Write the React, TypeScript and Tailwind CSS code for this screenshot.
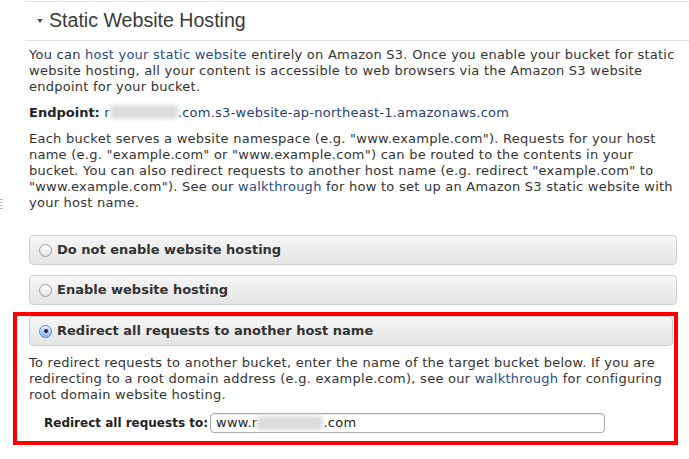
import type { ReactNode } from "react";

const LINK = "text-[#1f4e8c]";

function Radio({ checked }: { checked?: boolean }) {
  if (checked) {
    return (
      <span className="flex h-[13px] w-[13px] shrink-0 items-center justify-center rounded-full border border-[#5a86c4] bg-gradient-to-b from-[#d9e8fb] to-[#8fb6ea] shadow-[inset_0_1px_1px_rgba(255,255,255,0.8)]">
        <span className="h-[4px] w-[4px] rounded-full bg-[#1f2a3a]" />
      </span>
    );
  }
  return (
    <span className="h-[13px] w-[13px] shrink-0 rounded-full border border-[#9a9a9a] bg-gradient-to-b from-[#ffffff] to-[#e4e4e4]" />
  );
}

function OptionBar({ label, checked }: { label: string; checked?: boolean }) {
  return (
    <div className="flex h-[30px] items-center gap-[5px] rounded-[4px] border border-[#cfcfcf] bg-gradient-to-b from-[#f7f7f7] to-[#e4e4e4] pl-[9px]">
      <Radio checked={checked} />
      <span className="text-[13px] font-bold text-[#333]">{label}</span>
    </div>
  );
}

function Blur({ w }: { w: number }) {
  return (
    <span
      className="inline-block h-[14px] rounded-[3px] bg-[#dcdcdc] align-[-2px] blur-[2px]"
      style={{ width: w }}
    />
  );
}

function P({ children, className = "" }: { children: ReactNode; className?: string }) {
  return (
    <p className={`text-[13px] leading-[16px] tracking-[0.25px] text-[#333] ${className}`}>{children}</p>
  );
}

export default function App() {
  return (
    <div className="relative h-[459px] w-[689px] overflow-hidden bg-white font-['DejaVu_Sans',Verdana,sans-serif]">
      {/* resize grip on the far left */}
      <div className="absolute left-0 top-[199px] flex flex-col gap-[2px]">
        <span className="h-px w-[3px] bg-[#bbb]" />
        <span className="h-px w-[3px] bg-[#bbb]" />
        <span className="h-px w-[3px] bg-[#bbb]" />
        <span className="h-px w-[3px] bg-[#bbb]" />
      </div>

      <div className="ml-[25px] mt-px border-t border-[#e2e2e2]">
        {/* Header */}
        <div className="flex h-[39px] items-center border-b border-[#dedede] pl-[12px]">
          <span className="h-0 w-0 border-x-[3.5px] border-t-[4px] border-x-transparent border-t-[#555]" />
          <h2 className="ml-[6px] font-['Liberation_Sans',Arial,sans-serif] text-[19.6px] text-[#3a3a3a]">
            Static Website Hosting
          </h2>
        </div>

        <div className="pl-[4px] pr-[12px] pt-[6px]">
          <P>
            You can <span className={LINK}>host your static website</span> entirely on Amazon S3. Once you enable your bucket for static
            <br />
            website hosting, all your content is accessible to web browsers via the Amazon S3 website
            <br />
            endpoint for your bucket.
          </P>

          <P className="mt-[10px]">
            <span className="font-bold tracking-normal text-[#222]">Endpoint:</span>{" "}
            <span className="text-[#1f3f70]">
              r<Blur w={68} />.com.s3-website-ap-northeast-1.amazonaws.com
            </span>
          </P>

          <P className="mt-[10px]">
            Each bucket serves a website namespace (e.g. "www.example.com"). Requests for your host
            <br />
            name (e.g. "example.com" or "www.example.com") can be routed to the contents in your
            <br />
            bucket. You can also redirect requests to another host name (e.g. redirect "example.com" to
            <br />
            "www.example.com"). See our <span className={LINK}>walkthrough</span> for how to set up an Amazon S3 static website with
            <br />
            your host name.
          </P>

          <div className="mt-[24px]">
            <OptionBar label="Do not enable website hosting" />
          </div>
          <div className="mt-[10px]">
            <OptionBar label="Enable website hosting" />
          </div>

          {/* Highlighted option */}
          <div className="-ml-[16px] mt-[7px] w-[665px] border-4 border-[#ff0000] pb-[8px] pl-[12px] pr-px">
            <OptionBar label="Redirect all requests to another host name" checked />
            <P className="mt-[9px]">
              To redirect requests to another bucket, enter the name of the target bucket below. If you are
              <br />
              redirecting to a root domain address (e.g. example.com), see our <span className={LINK}>walkthrough</span> for configuring
              <br />
              root domain website hosting.
            </P>
            <div className="mt-[10px] flex items-center">
              <label className="w-[181px] pr-[2px] text-right text-[12px] font-bold text-[#222]">
                Redirect all requests to:
              </label>
              <div className="flex h-[20px] w-[395px] items-center rounded-[4px] border border-[#a9a9a9] bg-white pl-[5px] text-[13px] tracking-[0.25px] text-[#222] shadow-[inset_0_1px_1px_rgba(0,0,0,0.08)]">
                www.r<Blur w={66} />.com
              </div>
            </div>
          </div>
        </div>
      </div>
    </div>
  );
}
